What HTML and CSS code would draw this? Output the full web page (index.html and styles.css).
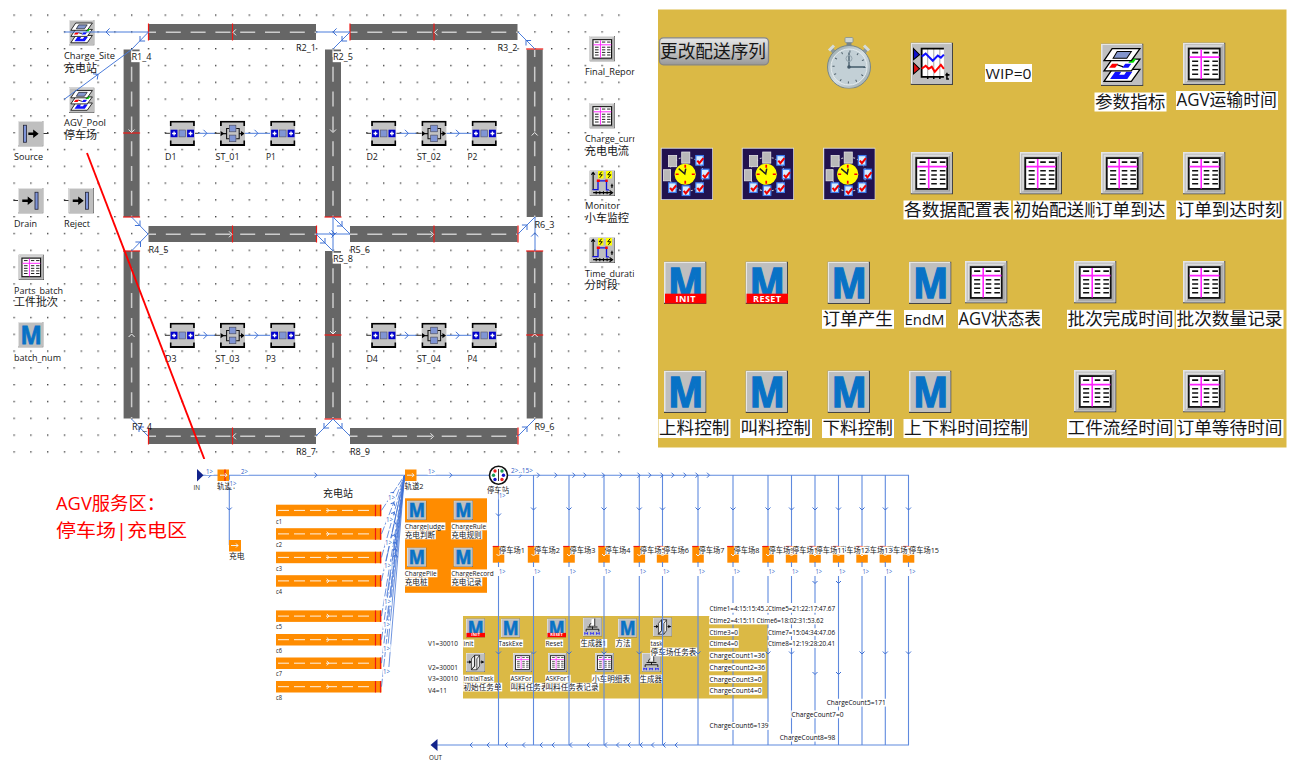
FILE: index.html
```html
<!DOCTYPE html>
<html lang="zh-CN">
<head>
<meta charset="utf-8">
<title>AGV 仿真模型</title>
<link rel="stylesheet" href="styles.css">
</head>
<body>
<svg class="defs" width="0" height="0" aria-hidden="true">
  <defs>
    <pattern id="dots" x="13.4" y="14.4" width="16.8" height="16.8" patternUnits="userSpaceOnUse"><rect width="1.4" height="1.4" fill="#444"/></pattern>
    <linearGradient id="btn" x1="0" y1="0" x2="0" y2="1"><stop offset="0" stop-color="#e6e6e6"/><stop offset=".5" stop-color="#c4c4c4"/><stop offset="1" stop-color="#989898"/></linearGradient>
    <linearGradient id="steel" x1="0" y1="0" x2="1" y2="1"><stop offset="0" stop-color="#8fa0a4"/><stop offset=".5" stop-color="#d5dfe3"/><stop offset="1" stop-color="#97a5aa"/></linearGradient>
    <symbol id="tile" viewBox="0 0 42 42"><rect width="42" height="42" fill="#444"/><rect width="40.800" height="40.800" fill="#e6e6e6"/><rect x="1.500" y="1.500" width="39.300" height="39.300" fill="#bfbfbf"/></symbol>
    <symbol id="table" viewBox="0 0 42 42">
      <use href="#tile"/><path d="M3.500 38.500V3.500H38.500" fill="none" stroke="#ddd" stroke-width="1.500"/><path d="M38.500 4v34.500H4" fill="none" stroke="#999"/>
      <rect x="5.700" y="6" width="30.600" height="30.500" fill="#fff" stroke="#111" stroke-width="1.800"/>
      <path d="M18 7v29M6.500 14.500H36" stroke="#f2f" stroke-width="1.600"/>
      <path d="M9 10h6M20.500 10h5.500M29 10h5.500M9 18.500h6M20.500 18.500h5.500M29 18.500h5.500M9 22.800h6M20.500 22.800h5.500M29 22.800h5.500M9 27h6M20.500 27h5.500M29 27h5.500M9 31.300h6M20.500 31.300h5.500M29 31.300h5.500" stroke="#111" stroke-width="1.500"/>
    </symbol>
    <symbol id="method" viewBox="0 0 42 42"><use href="#tile"/><text class="em" x="21.500" y="36" textLength="35" lengthAdjust="spacingAndGlyphs" text-anchor="middle">M</text></symbol>
    <symbol id="init" viewBox="0 0 42 42"><use href="#method"/><rect x="1" y="31.800" width="41" height="9.700" fill="red"/><text class="tag" x="21.500" y="39.700" text-anchor="middle">INIT</text></symbol>
    <symbol id="reset" viewBox="0 0 42 42"><use href="#method"/><rect x="1" y="31.800" width="41" height="9.700" fill="red"/><text class="tag" x="21.500" y="39.700" text-anchor="middle">RESET</text></symbol>
    <symbol id="layers" viewBox="0 0 42 42"><use href="#tile"/>
      <g stroke="#000" stroke-width="1.300"><path d="M3 37.500L11 25.500H38.500L30 37.500Z" fill="#fff"/><path d="M9 35L14 28h6l-2 3h5l2-3h6l-5 7Z" fill="#11f" stroke="none"/>
      <path d="M3 27L11 15.500H38.500L30 27Z" fill="#fff"/><path d="M8 24l3-4h6l-3 4Z" fill="red" stroke="none"/><path d="M16 21l6 2"/><path d="M21 24l3-4h6l-3 4Z" fill="#11f" stroke="none"/><path d="M27 19l3-4h5l-3 4Z" fill="#0d0" stroke="none"/>
      <path d="M3 17L11 5H38.500L30 17Z" fill="#fff"/><path d="M12 14.500L16 8h14l-4.500 6.500Z" fill="#8395cc" stroke-width="1"/></g>
    </symbol>
    <symbol id="source" viewBox="0 0 42 42"><use href="#tile"/><rect x="9" y="7" width="5" height="28" fill="#7e94d8" stroke="#223" stroke-width="1.300"/><path d="M17 19h8v-5l9 7-9 7v-5h-8Z"/></symbol>
    <symbol id="drain" viewBox="0 0 42 42"><use href="#tile"/><rect x="28" y="7" width="5" height="28" fill="#7e94d8" stroke="#223" stroke-width="1.300"/><path d="M7 19h9v-5l9 7-9 7v-5H7Z"/></symbol>
    <symbol id="buffer" viewBox="0 0 42 42"><rect width="42" height="42" fill="#c3c3c3"/><path d="M1.500 9V1.500h39V9M1.500 33v7.500h39V33" fill="none" stroke="#000" stroke-width="3"/>
      <rect x="1.500" y="15" width="11.500" height="12.500" fill="#00c"/><rect x="29" y="15" width="11.500" height="12.500" fill="#00c"/><rect x="15.500" y="15.500" width="11" height="11.500" fill="#8095d4" stroke="#556"/><path d="M7.300 18v6.500M4 21.300h6.500M34.700 18v6.500M31.500 21.300H38" stroke="#fff" stroke-width="2.200"/></symbol>
    <symbol id="station" viewBox="0 0 42 42"><rect width="42" height="42" fill="#c3c3c3"/><path d="M1.500 9V1.500h39V9M1.500 33v7.500h39V33" fill="none" stroke="#000" stroke-width="3"/><path d="M16 13h-5v17h5M27 13h5v17h-5M5 21.500h6M32 21.500h5" fill="none" stroke="#111" stroke-width="1.800"/><path d="M1 17l6 4.500L1 26ZM35 17l6 4.500-6 4.500Z"/><rect x="15.500" y="7.500" width="11" height="11" fill="#8095d4" stroke="#445"/><rect x="15.500" y="24" width="11" height="11" fill="#8095d4" stroke="#445"/></symbol>
    <symbol id="monitor" viewBox="0 0 42 42"><use href="#tile"/><path d="M14 1h9v12h-9ZM27 1h10v12H27Z" fill="#ff0"/><path d="M6 5v27M6 36.500h30M3 7l3-4 3 4M33 33l5 3.500-5 3.500M11 34v5M17 34v5M23 34v5M29 34v5M37 22v7M35 25h4" fill="none" stroke="#000" stroke-width="1.800"/><path d="M5 31.500h9V17h14v15h4" fill="none" stroke="#11d" stroke-width="2.200"/><path d="M20 2l-4 5h5l-4 5M34 2l-4 5h5l-4 5" fill="none" stroke="#000" stroke-width="1.500"/><path d="M12 15h5v4h-5ZM26 15h4v4h-4Z" fill="red"/></symbol>
    <symbol id="chart" viewBox="0 0 42 42"><use href="#tile"/><rect x="11" y="6" width="22" height="28" fill="#fff"/><path d="M17 6v28M23 6v28M29 6v28" stroke="#aaa"/><path d="M33 6H11v28h22" fill="none" stroke="#000" stroke-width="1.800"/><path d="M3 6l6 6-6 5Z" fill="#11c" stroke="#000"/><path d="M3 20l6 6-6 5Z" fill="#d11" stroke="#000"/><path d="M11 14l4-3 7 7 5-5 3 2 3-3" fill="none" stroke="#11f" stroke-width="2"/><path d="M11 26l4-3 3 3 3-2 3 5 6-7 3 4" fill="none" stroke="red" stroke-width="2"/><path d="M17 33v3M23 33v3M29 33v3M36 30v6h2M34.500 32h4" stroke="#000" stroke-width="1.500" fill="none"/></symbol>
    <symbol id="shift" viewBox="0 0 52 52"><rect width="52" height="52" fill="#ddd"/><rect x="1.200" y="1.200" width="50" height="50" fill="#21124f"/><circle cx="25.500" cy="26.500" r="17" fill="none" stroke="#ccc" stroke-dasharray="2 2"/>
      <g fill="#b9b9b9" stroke="#e5e5e5" stroke-width=".8"><rect x="8" y="8" width="8" height="11"/><rect x="21" y="4.500" width="8" height="11"/><rect x="3" y="22" width="7" height="11"/></g>
      <g fill="#d7edff" stroke="#3c7bef" stroke-width="1.200"><rect x="35" y="8" width="7.500" height="9.500"/><rect x="40.500" y="21.500" width="7.500" height="9.500"/><rect x="35" y="35" width="7.500" height="9.500"/><rect x="21.500" y="38" width="7.500" height="9.500"/><rect x="8" y="35" width="7.500" height="9.500"/></g>
      <path d="M36.500 13l2 2.500 4-5M42 27l2 2.500 4-5M36.500 40l2 2.500 4-5M23 43l2 2.500 4-5M9.500 40l2 2.500 4-5" fill="none" stroke="#e00" stroke-width="2"/>
      <circle cx="24.500" cy="26.500" r="10.500" fill="#ff0"/><path d="M24.500 17v3M24.500 33v3M15 26.500h3M31 26.500h3" stroke="red" stroke-width="1.700"/><path d="M18 21l6 5 1-5" fill="none" stroke="#222" stroke-width="1.500"/></symbol>
    <symbol id="watch" viewBox="0 0 46 52"><path d="M5 12l4 5M41 12l-4 5" stroke="#8c9797" stroke-width="4"/><path d="M3 14l5-5M43 14l-5-5" stroke="#d5dcdc" stroke-width="3"/><rect x="20.500" y="3" width="5" height="8" fill="#788484"/><rect x="19" y="1" width="8" height="5" rx="1" fill="#cdd6d6" stroke="#849090" stroke-width=".8"/><circle cx="23" cy="30.500" r="21.500" fill="url(#steel)" stroke="#76868a"/><circle cx="23" cy="30.500" r="18" fill="#c3d0d6" stroke="#e5ecef"/><circle cx="23" cy="30.500" r="15.500" fill="none" stroke="#4c5d68" stroke-width="2.200" stroke-dasharray="1 7.115"/><path d="M23 30.500h16M23 30.500V16" stroke="#435968" stroke-width="1.300"/><circle cx="23" cy="22" r="3" fill="none" stroke="#93a4ad"/><circle cx="23" cy="30.500" r="1.800" fill="#435968"/></symbol>
    <symbol id="generator" viewBox="0 0 42 42"><use href="#tile"/><path d="M21 26V20M7 31v-5h28v5M10 21h22M16 21c-4-6 1-8 4-8l6-11" fill="none" stroke="#111" stroke-width="2"/><path d="M19 4l8-2v15h-9Z" fill="#fff"/><path d="M26 3v16" stroke="#111" stroke-width="2"/><path d="M4 38v-5l3 3 3-3v5M17 38v-5l3 3 3-3v5M30 38v-5l3 3 3-3v5" fill="none" stroke="#22f" stroke-width="2"/></symbol>
    <symbol id="queue" viewBox="0 0 42 42"><use href="#tile"/><path d="M2 20h8M32 20h8" stroke="#111" stroke-width="2"/><path d="M7 16l5 4-5 4ZM34 16l5 4-5 4Z"/><path d="M12 13l7-8v24l-7 8ZM19 5h11v24l-6 8H12l7-8Z" fill="#eee" stroke="#222" stroke-width="1.700"/><path d="M30 5l-6 8v24" fill="none" stroke="#222" stroke-width="1.700"/></symbol>
  </defs>
</svg>
<main class="board">
  <svg class="network" id="network" viewBox="0 0 650 459"></svg>
  <svg class="toolbox" id="toolbox" viewBox="650 0 648 459"></svg>
  <svg class="service" id="service" viewBox="0 459 1298 319"></svg>
</main>
<script src="diagram.js"></script>
</body>
</html>
```

FILE: styles.css
```css
html, body { margin: 0; background: #fff; }
body { overflow: hidden; }
.defs { position: absolute; }
.board {
  display: grid;
  grid-template-columns: 650px 648px;
  grid-template-rows: 459px 319px;
  width: 1298px;
  height: 778px;
}
.board svg { display: block; width: 100%; height: 100%; }
.service { grid-column: 1 / -1; }
text { font-family: "Open Sans", "Noto Sans CJK SC", sans-serif; fill: #161616; white-space: pre; }
.em { font: 700 41.5px "Noto Sans", "Open Sans", sans-serif; fill: #0872c6; stroke: #0872c6; stroke-width: 1.3; }
.tag { font: 700 9px "Open Sans", sans-serif; fill: #fff; letter-spacing: .4px; }
.road { fill: #666; }
.lane { fill: none; stroke: #ccc; stroke-width: 1.5; stroke-dasharray: 15 9.8; stroke-dashoffset: 7.5; }
.stop { stroke: #f01814; stroke-width: 1.2; }
.link { fill: none; stroke: #4b7cdb; stroke-width: 1; }
.wire { fill: none; stroke: #5f8ade; stroke-width: 1.1; }
.feeder { fill: none; stroke: #3f70d4; stroke-width: .75; }
.dashed { stroke-dasharray: 8 2; }
.chevron { fill: none; stroke: #3f70d4; stroke-width: 1; }
.chevron.pale { stroke: #f2f2f2; }
.stub { stroke: #333; stroke-width: 1; }
.backing { fill: #fff; }
.gold { fill: #dbb945; }
.orange { fill: #ff8c00; }
.port { fill: #11238b; }
.bar-lane { stroke: #fff; stroke-width: .9; stroke-dasharray: 11 5; }
.callout { stroke: #f00; stroke-width: 1.9; }
.note { fill: #f00; }
.flow { fill: #2f5fc8; }
.dark { fill: #08080e; }
```

FILE: diagram.js
```js
const NS = 'http://www.w3.org/2000/svg';
let root;

function el(name, attrs, text) {
  const node = document.createElementNS(NS, name);
  for (const key in attrs) node.setAttribute(key, attrs[key]);
  if (text !== undefined) node.textContent = text;
  root.appendChild(node);
  return node;
}
const rect = (x, y, width, height, cls) => el('rect', { x, y, width, height, class: cls });
const path = (d, cls) => el('path', { d, class: cls });
const icon = (name, x, y, size, height) =>
  el('use', { href: '#' + name, x, y, width: size, height: height || size });

// Text at a baseline; w fixes the drawn width, bg adds a white backing.
function label(x, y, text, size, w, bg, cls) {
  if (bg) rect(x - 0.3, y - size * 0.92, w + 1, size * 1.15, 'backing');
  const attrs = { x, y, 'font-size': size, class: cls || 'name' };
  if (w) { attrs.textLength = w; attrs.lengthAdjust = 'spacingAndGlyphs'; }
  el('text', attrs, text);
}
// Arrow head whose tip lies at x,y; angle in degrees, 0 points right.
function chevron(x, y, angle, size, pale) {
  const s = size || 3.5;
  el('path', { d: `M${-s} ${-s}L0 0L${-s} ${s}`, transform: `translate(${x} ${y}) rotate(${angle})`, class: pale ? 'chevron pale' : 'chevron' });
}

function drawNetwork() {
  root = document.getElementById('network');
  el('rect', { x: 13, y: 14, width: 621.5, height: 440, fill: 'url(#dots)' });

  // [x, y, vertical, arrow direction, stop positions along the road]
  const roads = [
    [148.5, 24, 0, 180, [0, 84]], [350, 24, 0, 180, [0, 84]],
    [148.5, 226, 0, 0, [84, 168]], [350, 226, 0, 0, [84, 168]],
    [148.5, 428, 0, 180, [0, 84]], [350, 428, 0, 0, [168]],
    [123.6, 49.5, 1, 90, [83.5, 167.5]], [325, 49.5, 1, 90, [167.5]], [526.7, 49.5, 1, 270, [-.5]],
    [123.6, 251, 1, 270, [0]], [325, 251, 1, 90, [84, 168]], [526.7, 251, 1, 270, [0, 84]]
  ];
  for (const [x, y, v, dir, stops] of roads) {
    if (v) {
      rect(x, y, 16, 167.5, 'road');
      path(`M${x + 8} ${y}v167.5`, 'lane');
      stops.forEach(s => path(`M${x - .5} ${y + s}h17`, 'stop'));
      chevron(x + 8, y + 83, dir, 3, true);
    } else {
      rect(x, y, 167.5, 16, 'road');
      path(`M${x} ${y + 8.3}h167.5`, 'lane');
      stops.forEach(s => path(`M${x + s} ${y - .5}v17`, 'stop'));
      chevron(x + (dir ? 84.5 : 83.5), y + 8.3, dir, 3, true);
    }
  }
  const icons = [['layers', 69, 20], ['layers', 69, 87.5], ['source', 18, 121], ['drain', 18, 188], ['drain', 68.5, 188],
    ['table', 18.5, 254.5], ['method', 18, 322], ['table', 589.5, 36], ['table', 589.5, 103], ['monitor', 589.5, 170.5], ['monitor', 589.5, 237.5]];
  icons.forEach(i => icon(i[0], i[1], i[2], 25.5));
  path('M43.500 133.500h5M13.500 200.500h4.500M64 200.500h4.500', 'stub');

  label(131.500, 60, 'R1_4', 9.5, 20, true);
  label(333, 60, 'R2_5', 9.5, 20, true);
  label(333, 261.500, 'R5_8', 9.5, 20, true);

  path('M148.500 32H64M148.500 32L131 50L64 99.500M350 32H316M350 32L333 49M518 32L535 49M131.500 217L148 234L131.500 251M316 234H350M333 217V251M333 217L350 234M316 234L333 251M518 234L535 217V251M131.500 419L148 436M316 436L333 419L350 436M518 436L535 419', 'link');
  [[106, 32, 180], [140, 41, 135], [98, 74.500, -36], [333, 32, 180], [342, 41, 135], [526, 40.500, 225], [140, 225.500, 45], [140.500, 242, -45],
   [335, 234, 0], [333, 236, 90], [342, 226, 45], [325, 243, 45], [527, 225, -45], [534.700, 233, 270], [139, 427, 225], [324, 428, 135], [342, 428, 45], [527, 427, -45]
  ].forEach(a => chevron(...a, 3.6));

  for (let r = 0; r < 2; r++) for (let c = 0; c < 2; c++) {
    const dx = c * 201.4, dy = r * 202, n = r * 2 + c + 1;
    path(`M${165 + dx} ${133.3 + dy}H${170 + dx}M${195 + dx} ${133.3 + dy}h4M${214 + dx} ${133.3 + dy}h7M${295 + dx} ${133.3 + dy}h5`, 'stub');
    path(`M${198 + dx} ${133.3 + dy}h17M${245 + dx} ${133.3 + dy}h25`, 'link');
    chevron(207 + dx, 133.3 + dy, 0); chevron(258 + dx, 133.3 + dy, 0);
    icon('buffer', 169.7 + dx, 120.7 + dy, 25.2);
    icon('station', 220 + dx, 120.7 + dy, 25.2);
    icon('buffer', 270.2 + dx, 120.7 + dy, 25.2);
    label(165 + dx, 159.7 + dy, 'D' + n, 9.5, 11.5);
    label(215.5 + dx, 159.7 + dy, 'ST_0' + n, 9.5, 24);
    label(266 + dx, 159.7 + dy, 'P' + n, 9.5, 10);
  }
  [[64, 59, 'Charge_Site', 51], [64, 126, 'AGV_Pool', 42], [14, 160, 'Source', 29], [14, 227, 'Drain', 23], [64, 227, 'Reject', 26],
   [14, 293.500, 'Parts_batch', 49], [14, 361, 'batch_num', 47], [585, 74.500, 'Final_Repor', 50], [585, 142, 'Charge_curr', 51], [585, 209.300, 'Monitor', 35], [585, 276.500, 'Time_durati', 49.500],
   [296, 51.300, 'R2_1', 20], [497.500, 51.300, 'R3_2', 20], [534.500, 228, 'R6_3', 20], [148.500, 253, 'R4_5', 20], [350, 253, 'R5_6', 20],
   [132, 430, 'R7_4', 20], [296, 455, 'R8_7', 20], [350, 455, 'R8_9', 20], [534.500, 430, 'R9_6', 20]
  ].forEach(t => label(t[0], t[1], t[2], 9.5, t[3]));
  [[64, 71.800, '充电站', 33], [64, 139, '停车场', 33], [14, 306, '工件批次', 44], [585, 154.800, '充电电流', 44], [585, 222, '小车监控', 44], [585, 289, '分时段', 33]
  ].forEach(t => label(t[0], t[1], t[2], 11.3, t[3]));
  rect(634.500, 45, 10, 240, 'backing');
  path('M87 153L204.300 459', 'callout');
}

function drawToolbox() {
  root = document.getElementById('toolbox');
  rect(658, 9.500, 628.500, 438, 'gold');
  el('rect', { x: 659.5, y: 37.8, width: 109, height: 27, rx: 4, fill: 'url(#btn)', stroke: '#858585', 'stroke-width': 1.3 });
  label(660, 57.600, '更改配送序列', 18, 106);
  icon('watch', 826, 36.500, 46, 52);
  [['chart', 910.5, 42.5], ['layers', 1101, 43.500], ['table', 1183, 42.5], ['table', 910.5, 152], ['table', 1019.5, 152], ['table', 1101, 152], ['table', 1183, 152],
   ['init', 664, 261.500], ['reset', 745.5, 261.500], ['method', 827.5, 261.500], ['method', 909, 261.500], ['table', 965, 261], ['table', 1074, 261], ['table', 1183, 261],
   ['method', 664, 370.500], ['method', 745.5, 370.500], ['method', 827.5, 370.500], ['method', 909, 370.500], ['table', 1074, 370], ['table', 1183, 370]
  ].forEach(i => icon(i[0], i[1], i[2], 42.5));
  [660.5, 741.5, 823].forEach(x => icon('shift', x, 147.500, 52.500));

  // [x, box top, box width, text]
  [[1094.500, 92.500, 72, '参数指标'], [1176, 91, 102, 'AGV运输时间'], [903.5, 200.500, 107.500, '各数据配置表'], [1013, 200.500, 90, '初始配送顺'], [1094.500, 200.500, 72, '订单到达'], [1176, 200.500, 107.500, '订单到达时刻'],
   [822, 309.800, 72, '订单产生'], [958, 309.500, 84, 'AGV状态表'], [1067, 309.800, 107.500, '批次完成时间'], [1176, 309.800, 107.500, '批次数量记录'],
   [658.5, 419, 72, '上料控制'], [740, 419, 72, '叫料控制'], [822, 419, 72, '下料控制'], [903.5, 419, 125.500, '上下料时间控制'], [1067, 419, 107.500, '工件流经时间'], [1176, 419, 107.500, '订单等待时间']
  ].forEach(([x, y, w, text]) => {
    rect(x, y, w, 19, 'backing');
    label(x + .5, y + 15, text, 17.6, w - 1.5);
  });
  rect(985, 64, 47, 18, 'backing'); label(985.500, 79, 'WIP=0', 15.2, 46);
  rect(904, 310, 42, 17.500, 'backing'); label(904.500, 325, 'EndM', 15.2, 40);
}

function drawService() {
  root = document.getElementById('service');
  label(56, 509.500, 'AGV服务区：', 18, 109, false, 'note');
  label(56, 536.500, '停车场|充电区', 18, 131, false, 'note');
  const flow = (x, y, text, w) => label(x, y, text, 6.8, w, true, 'flow');

  path('M203 475.200H908.500V745H437', 'wire');
  path('M229.300 475V545', 'wire');
  path('M197 469l6.500 6.200l-6.500 6.200Z', 'port'); path('M437.500 739l-7 6l7 6Z', 'port');
  chevron(211, 475.200, 0, 2.5); chevron(317, 475.200, 0, 2.5); chevron(452, 475.200, 0, 2.5); chevron(229.300, 510, 90, 2.5);
  label(193.500, 490, 'IN', 7, 6.500); label(429, 760, 'OUT', 7, 13);

  rect(217.500, 469.500, 11.500, 11.500, 'orange'); rect(229, 540, 12, 11.500, 'orange'); rect(405, 469.500, 11.500, 11.500, 'orange');
  path('M225 469.500v11.500', 'stop');
  [[227, 475.200], [238, 545.500], [414, 475.200]].forEach(p => { path(`M${p[0] - 7} ${p[1]}h7`, 'chevron pale'); chevron(p[0], p[1], 0, 2, true); });
  label(217, 489, '轨道1', 7.6, 19); label(404.500, 489, '轨道2', 7.6, 19); label(229, 559, '充电', 7.8, 15.500); label(323, 497, '充电站', 10, 30);
  flow(206, 473.500, '1>', 7); flow(241, 473.500, '2>', 7); flow(229.500, 486, '1>', 7); flow(428, 473.500, '1>', 7);

  const marks = [[388, 499.500], [386, 521.500], [385, 544.500], [384, 568], [384, 604], [383, 627], [383, 650.500], [383, 674]];
  [504.700, 528.200, 551.700, 575.200, 610.400, 634, 657.500, 681].forEach((y, i) => {
    rect(276, y, 105.500, 11.500, 'orange');
    path(`M278 ${y + 5.7}h96`, 'bar-lane'); chevron(329, y + 5.7, 0, 2.2, true);
    path(`M375.500 ${y}v11.500M380.500 ${y}v11.500`, 'stop');
    label(276, y + 18.800, 'c' + (i + 1), 6.8, 6);
    path(`M381.500 ${y + 5.700}L404.500 475.500`, 'feeder dashed');
    if (i > 2) path(`M${384 + i * .7} ${y - 14}L404.500 475.500`, 'feeder');
    const t = .52 + i * .015;
    chevron(381.5 + 23 * t, y + 5.7 + (475.5 - y - 5.7) * t, -60 - i * 3, 2.3);
  });
  marks.forEach(m => flow(m[0], m[1], '1>', 7));

  rect(405, 498.300, 82, 94.500, 'orange');
  [[407, 500.500, 'ChargeJudge', 40, '充电判断'], [453.500, 500.500, 'ChargeRule', 35, '充电规则'], [407, 547.500, 'ChargePile', 32, '充电桩'], [453.500, 547.500, 'ChargeRecord', 42.500, '充电记录']].forEach(([x, y, a, w, b]) => {
    icon('method', x, y, 19.5);
    label(x - 2.300, y + 28.200, a, 6.8, w, true);
    label(x - 2.300, y + 37, b, 7.8, b.length * 7.600, true);
  });

  rect(463, 616, 305, 82.500, 'gold');
  [['init', 466, 618.500], ['method', 501, 618.500], ['reset', 547, 618.500], ['generator', 583, 617.500], ['method', 618, 618.500], ['queue', 653, 617.500],
   ['queue', 466, 653], ['table', 513, 653], ['table', 548, 653], ['table', 595, 653], ['generator', 642, 653]].forEach(i => icon(i[0], i[1], i[2], 19));
  [[463.500, 645.800, 'init', 10], [498.500, 645.800, 'TaskExe', 24], [545.500, 645.800, 'Reset', 17], [650.500, 645.800, 'task', 12], [463.500, 681, 'InitialTask', 30], [510.500, 681, 'ASKFor', 21], [545.500, 681, 'ASKFor1', 24.500]
  ].forEach(t => label(t[0], t[1], t[2], 6.8, t[3], true));
  [[580.500, 646, '生成器1', 26], [615.500, 646, '方法', 15], [650.500, 654.500, '停车场任务表', 46], [592, 681.500, '小车明细表', 38], [639.500, 681.500, '生成器', 22.500],
   [463.500, 689.700, '初始任务单', 38], [510.500, 689.700, '叫料任务表', 38], [545.500, 689.700, '叫料任务表记录', 53]].forEach(t => label(t[0], t[1], t[2], 7.6, t[3], true));
  [[646, 'V1=30010', 30], [669.500, 'V2=30001', 30], [681, 'V3=30010', 30], [693, 'V4=11', 19]].forEach(t => label(428, t[0], t[1], 6.8, t[2]));

  const xs = [498.500, 533.500, 569, 604, 639.300, 662.500, 698, 733, 768, 791.500, 815, 838.500, 862, 885.300, 908.500];
  xs.forEach((x, i) => {
    if (i < 14) path(`M${x} ${i ? 475 : 490}V745`, 'wire');
    chevron(x, i ? 510 : 516, 90, 2.500);
    if (i === 10 || i === 11) { chevron(x, 583.500, 90, 2.5); chevron(x, 674.500, 90, 2.5); }
    else chevron(x, 654, 90, 2.5);
    rect(x - 2, 563, 5, 13, 'backing');
    rect(x - 5.700, 546, 11.500, 16.700, 'orange');
    path(`M${x - 5.700} 546.500h6`, 'stop');
    path(`M${x} 562v5`, 'wire'); chevron(x, 556, 90, 2, true);
    flow(x + .500, 573.800, '1>', 6.500);
  });
  // Later stations partly cover the names of their neighbours.
  [0, 1, 2, 3, 4, 5, 6, 7, 8, 9, 13, 12, 11, 10, 14].forEach(i => {
    const text = '停车场' + (i + 1), w = i > 8 ? 30 : 26;
    rect(xs[i] + 1, 546.500, w - 1, 8, 'backing');
    label(xs[i] + .500, 553.200, text, 7.6, w);
  });
  [521.500, 539.500, 557, 575, 586, 604.500, 622, 640, 651, 663, 674, 686, 698, 709.500].forEach(x => chevron(x, 475.200, 0, 2.5));
  [470, 487, 505, 522.500, 540, 552, 569.500, 587, 604.500, 616.500, 628, 640, 651.500, 663, 675].forEach(x => chevron(x, 745, 180, 2.5));
  flow(511, 473, '2>..15>', 22);
  label(487, 493, '停车站', 7.6, 22);
  flow(499, 498, '1>', 6.500);

  el('circle', { cx: 498.5, cy: 475.2, r: 9, fill: '#fff', stroke: '#111', 'stroke-width': 1.6 });
  path('M498.500 469v12', 'stub');
  [[495, 471, '#e22'], [502, 471, '#1a9a55'], [493.500, 475.200, '#1a9a55'], [503.500, 475.200, '#11c'], [495, 479.500, '#11c'], [502, 479.500, '#e22']].forEach(c => el('circle', { cx: c[0], cy: c[1], r: 1.7, fill: c[2] }));

  [[709.500, 611, 'Ctime1=4:15:15:45.2', 60], [768, 611, 'Ctime5=21:22:17:47.67', 67], [709.500, 622.700, 'Ctime2=4:15:11', 46], [756.500, 622.700, 'Ctime6=18:02:31:53.62', 67],
   [709.500, 634.500, 'Ctime3=0', 28.500], [768, 634.500, 'Ctime7=15:04:34:47.06', 67], [709.500, 646.300, 'Ctime4=0', 28.500], [768, 646.300, 'Ctime8=12:19:28:20.41', 67],
   [709.500, 658, 'ChargeCount1=36', 55.500], [709.500, 669.700, 'ChargeCount2=36', 55.500], [709.500, 681.500, 'ChargeCount3=0', 52], [709.500, 693.200, 'ChargeCount4=0', 52],
   [826.700, 705, 'ChargeCount5=171', 59], [791.500, 716.700, 'ChargeCount7=0', 52], [709.500, 728.300, 'ChargeCount6=139', 59], [779.700, 740, 'ChargeCount8=98', 55.500]
  ].forEach(([x, y, t, w]) => {
    if (y < 630) rect(x, y - 8, w + 2, 9.500, 'backing');
    label(x, y, t, 6.8, w, true, 'dark');
  });
}

drawNetwork();
drawToolbox();
drawService();
```
